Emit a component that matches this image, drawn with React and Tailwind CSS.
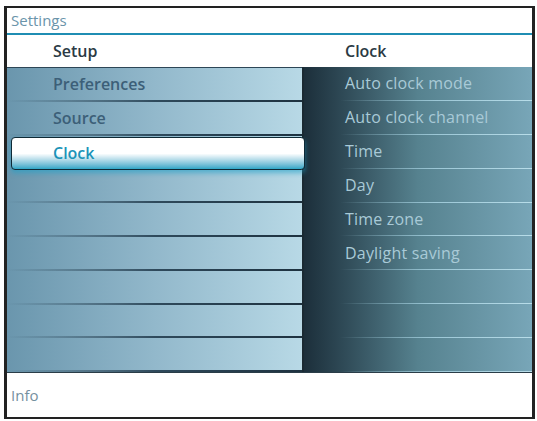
import React from 'react';

const leftRows = ['Preferences', 'Source', 'Clock', '', '', '', '', '', ''];
const rightRows = ['Auto clock mode', 'Auto clock channel', 'Time', 'Day', 'Time zone', 'Daylight saving', '', '', ''];

const font = { fontFamily: '"Open Sans", "Noto Sans", sans-serif' };

const App = () => {
  return (
    <div className="w-[537px] h-[421px] bg-white pt-[6px] pl-[4px]" style={font}>
      <div className="w-[531px] h-[413px] border-l-[3px] border-r-[3px] border-t-2 border-b-2 border-[#222] flex flex-col bg-white">
        {/* title */}
        <div className="h-[25px] flex items-center pl-[4px] text-[15px] text-[#6a94aa] leading-none">Settings</div>
        <div className="h-[2px] bg-[#1f8db3]" />

        {/* column headers */}
        <div className="h-[32px] flex items-center text-[16px] font-semibold text-[#2b3a44]">
          <div className="w-[295px] pl-[46px]">Setup</div>
          <div className="pl-[43px]">Clock</div>
        </div>

        {/* panels */}
        <div className="h-[305px] flex bg-[#1d2f3a]">
          <div className="w-[295px] flex flex-col bg-gradient-to-r from-[#6a96ad] via-[#92b8cb] to-[#b8d9e6] border-t border-[#2d4656]">
            {leftRows.map((label, i) =>
              label === 'Clock' ? (
                <div key={i} className="h-[34px] flex flex-col">
                  <div className="h-[35px] ml-[4px] -mr-[3px] mt-[1px] rounded-[4px] border border-[#0f2a36] bg-gradient-to-b from-white via-white to-[#2aa6c6] shadow-[0_3px_5px_rgba(30,160,200,0.6)] flex items-center pl-[41px] text-[16px] font-semibold text-[#1b93b8] relative z-10">
                    {label}
                  </div>
                </div>
              ) : (
                <div key={i} className="h-[34px] flex flex-col">
                  <div className="flex-1 flex items-center pl-[46px] text-[16px] font-semibold text-[#3c5f78] rounded-r-[3px]">
                    {label}
                  </div>
                  <div className="h-[2px] bg-gradient-to-r from-transparent via-[#2f4a5c] to-[#1e3240]" />
                </div>
              )
            )}
          </div>
          <div className="flex-1 flex flex-col bg-gradient-to-r from-[#1c2f3b] via-[#56828f] to-[#78a6b8] border-l-[2px] border-[#1a2a33]">
            {rightRows.map((label, i) => (
              <div key={i} className="h-[34px] flex flex-col">
                <div className="flex-1 flex items-center pl-[41px] text-[16px] font-medium text-[#a9cad7] tracking-[0.2px]">
                  {label}
                </div>
                <div className="h-[1px] ml-[36px] bg-gradient-to-r from-transparent via-[#9cc7d6] to-[#b8dde9]" />
              </div>
            ))}
          </div>
        </div>

        {/* info */}
        <div className="flex-1 flex items-center pl-[4px] text-[15px] text-[#7590a0] border-t border-[#2a3d48]">Info</div>
      </div>
    </div>
  );
};

export default App;
